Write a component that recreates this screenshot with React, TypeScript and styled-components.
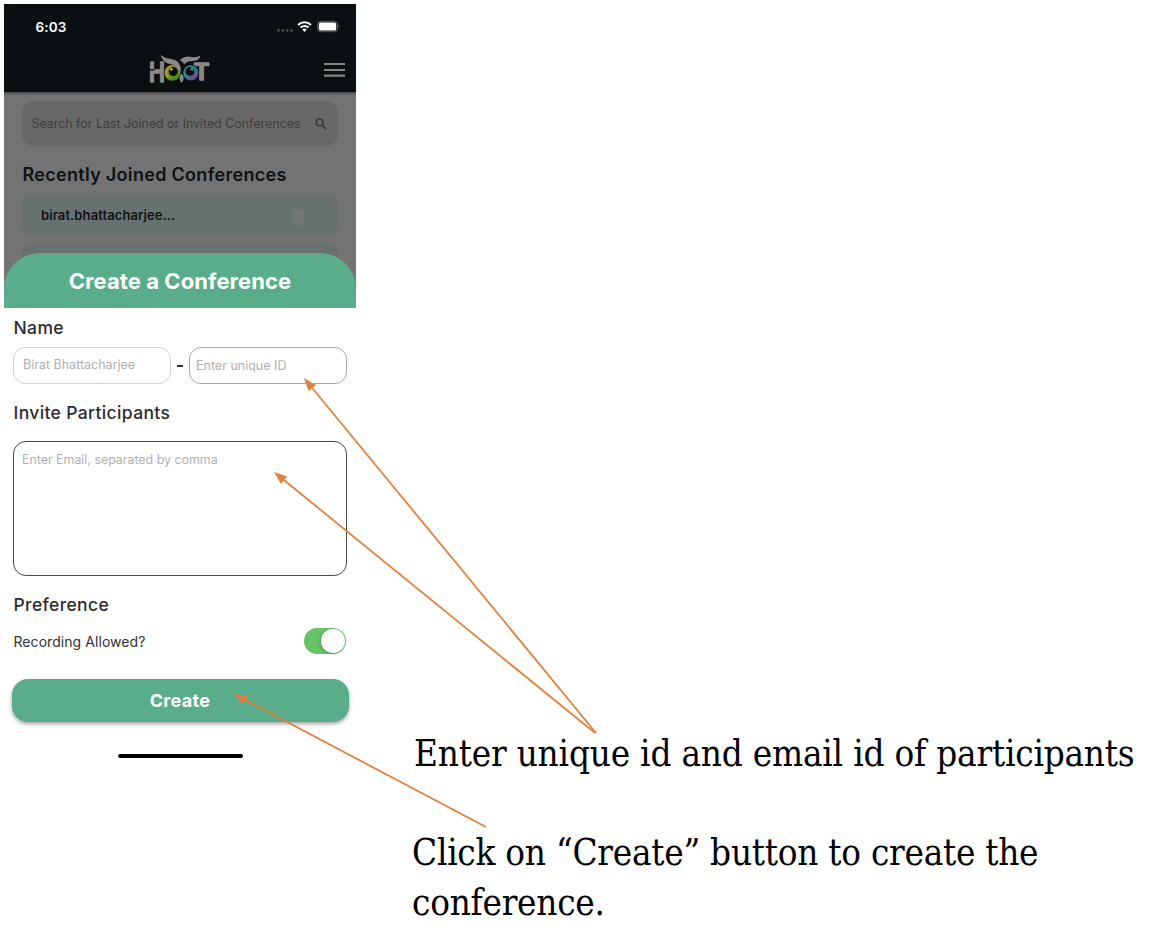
import React from "react";
import styled, { createGlobalStyle } from "styled-components";

const GlobalStyle = createGlobalStyle`
  * { box-sizing: border-box; }
  body { margin: 0; background: #fff; font-family: Inter, "Liberation Sans", sans-serif; }
`;

const Page = styled.main`
  position: relative;
  display: flex;
  width: 1166px;
  height: 936px;
  overflow: hidden;
`;

const Phone = styled.section`
  display: flex;
  flex-direction: column;
  width: 352px;
  height: 768px;
  margin: 4px 0 0 4px;
  flex: none;
`;

const TopBar = styled.header`
  height: 88px;
  flex: none;
  background: #0a0f12;
  box-shadow: 0 1px 3px rgba(0, 0, 0, 0.55);
  clip-path: inset(0 0 -6px 0);
  z-index: 1;
`;

const StatusBar = styled.div`
  display: flex;
  align-items: center;
  justify-content: space-between;
  height: 45px;
  padding: 0 16px 0 31.5px;
`;

const Clock = styled.span`
  color: #fff;
  font-size: 13.5px;
  font-weight: 600;
  letter-spacing: 0.1px;
`;

const NavBar = styled.div`
  display: grid;
  grid-template-columns: 1fr 62px 1fr;
  align-items: center;
  height: 43px;
  padding: 0 11.5px 0 10.5px;
`;

const MenuSlot = styled.span`
  display: flex;
  justify-content: flex-end;
  padding-bottom: 2px;
`;

const Backdrop = styled.div`
  display: flex;
  flex-direction: column;
  height: 215px;
  margin-bottom: -54px;
  padding: 9px 18px 0;
  background: #737373;
  flex: none;
  overflow: hidden;
`;

const SearchBox = styled.div`
  display: flex;
  align-items: center;
  justify-content: space-between;
  height: 45px;
  padding: 0 10px 1px 9.5px;
  border-radius: 12px;
  background: #686868;
  color: #3f3f3f;
  font-size: 12.4px;
  letter-spacing: 0;
  flex: none;
  white-space: nowrap;
  svg { flex: none; margin-top: 1px; }
`;

const SectionTitle = styled.h2`
  margin: 18px 0 8px 0.5px;
  color: #0e1215;
  font-size: 18px;
  font-weight: 600;
  line-height: 22px;
  letter-spacing: 0.3px;
  white-space: nowrap;
`;

const ConferenceRow = styled.div`
  display: flex;
  align-items: center;
  justify-content: space-between;
  height: 41px;
  margin-bottom: 8.5px;
  padding: 0 33px 0 19px;
  border-radius: 9px;
  background: #697070;
  color: #101416;
  font-size: 13px;
  font-weight: 600;
  letter-spacing: 0.1px;
  flex: none;
  svg { margin-top: 5px; }
`;

const Sheet = styled.div`
  display: flex;
  flex-direction: column;
  position: relative;
  z-index: 2;
`;

const SheetTitle = styled.h1`
  display: flex;
  align-items: center;
  justify-content: center;
  height: 54.5px;
  margin: 0;
  padding-top: 2px;
  border-radius: 36px 36px 0 0;
  background: #5aad8a;
  color: #fff;
  font-size: 22px;
  font-weight: 650;
  letter-spacing: 0.08px;
`;

const Form = styled.div`
  display: flex;
  flex-direction: column;
  padding: 9px 9px 0;
`;

const Label = styled.h3`
  margin: 0 0 0 0.5px;
  color: #2c2c2e;
  font-size: 17.5px;
  font-weight: 500;
  line-height: 22px;
  letter-spacing: 0.36px;
`;

const NameRow = styled.div`
  display: flex;
  align-items: center;
  justify-content: space-between;
  margin: 8px 0 18px;
  color: #222;
`;

const Dash = styled.span`
  width: 6px;
  height: 2px;
  margin-top: 2px;
  background: #333;
`;

const Field = styled.div<{ $border: string; $pad: number; $drop?: number }>`
  display: flex;
  align-items: center;
  width: 158px;
  height: 37px;
  padding: ${(p) => p.$drop ?? 0}px 0 1px ${(p) => p.$pad}px;
  border: 1px solid ${(p) => p.$border};
  border-radius: 12px;
  color: #b0b0b0;
  font-size: 12.5px;
`;

const EmailArea = styled.div`
  height: 135px;
  margin: 17px 0 18px;
  padding: 9px 8px;
  border: 1.3px solid #4a4a4a;
  border-radius: 13px;
  color: #b0b0b0;
  font-size: 12.4px;
  line-height: 17px;
`;

const SettingRow = styled.div`
  display: flex;
  align-items: center;
  justify-content: space-between;
  height: 27px;
  margin-top: 12px;
  padding-right: 1px;
  color: #333;
  font-size: 14px;
  letter-spacing: 0.06px;
`;

const SettingName = styled.span`
  padding: 1px 0 0 0.5px;
`;

const Toggle = styled.span`
  display: flex;
  justify-content: flex-end;
  width: 42px;
  height: 26px;
  padding: 1.3px;
  border-radius: 13px;
  background: #65c466;
`;

const Knob = styled.span`
  width: 23.4px;
  height: 23.4px;
  border-radius: 50%;
  background: #fff;
  box-shadow: -1px 1px 3px rgba(0, 0, 0, 0.22);
`;

const CreateButton = styled.button`
  height: 43px;
  margin: 24px -1.5px 0;
  border: 0;
  border-radius: 16px;
  background: #5aad8a;
  box-shadow: 0 2px 4px rgba(0, 0, 0, 0.36);
  color: #fff;
  font-family: inherit;
  font-size: 18px;
  font-weight: 650;
  letter-spacing: 0.3px;
`;

const HomeIndicator = styled.div`
  align-self: center;
  width: 125px;
  height: 4.5px;
  margin-top: 32px;
  border-radius: 3px;
  background: #000;
`;

const Notes = styled.aside`
  display: flex;
  flex-direction: column;
  gap: 49px;
  padding: 729px 0 0 56px;
`;

const Note = styled.p<{ $indent?: number; $spacing: number }>`
  margin: 0;
  padding-left: ${(p) => p.$indent ?? 0}px;
  color: #000;
  font-family: "DejaVu Serif Condensed", "DejaVu Serif", serif;
  font-stretch: condensed;
  font-size: 36.5px;
  line-height: 50px;
  letter-spacing: ${(p) => p.$spacing}px;
  white-space: nowrap;
`;

const ArrowLayer = styled.svg`
  position: absolute;
  inset: 0;
  z-index: 3;
  pointer-events: none;
`;

const StatusIcons = () => (
  <svg width="66" height="16" viewBox="0 0 66 16">
    <g fill="#484c4f">
      {[4.5, 8.8, 13.1, 17.4].map((x) => (
        <circle key={x} cx={x} cy="11.4" r="1.4" />
      ))}
    </g>
    <g fill="none" stroke="#fff" strokeWidth="2.1">
      <path d="M24.1 5.9a9.2 9.2 0 0 1 12.8 0" />
      <path d="M26.6 8.6a5.6 5.6 0 0 1 7.8 0" />
    </g>
    <path d="M28.3 10.6a3.2 3.2 0 0 1 4.4 0l-2.2 2.4z" fill="#fff" />
    <rect x="43.5" y="2.3" width="20" height="10.4" rx="3" fill="none" stroke="#5b5f61" />
    <rect x="44.8" y="3.5" width="17.4" height="8" rx="1.5" fill="#fff" />
    <path d="M64.6 5.7q1.6 1.7 0 3.5z" fill="#5b5f61" />
  </svg>
);

const Logo = () => (
  <svg width="62" height="43" viewBox="149 49 62 43">
    <defs>
      <linearGradient id="eyeLeft" x1="0" y1="0" x2="0.8" y2="1">
        <stop offset="0.35" stopColor="#a09c28" />
        <stop offset="1" stopColor="#2c8a22" />
      </linearGradient>
      <linearGradient id="eyeRight" x1="0.1" y1="0" x2="0.8" y2="1">
        <stop offset="0.4" stopColor="#278b91" />
        <stop offset="1" stopColor="#86398a" />
      </linearGradient>
    </defs>
    <g fill="#8a8888" stroke="#8a8888" strokeWidth="1.6" strokeLinejoin="round" fontFamily="Inter, sans-serif" fontWeight="600">
      <text x="149" y="81.6" fontSize="27" textLength="16" lengthAdjust="spacingAndGlyphs">H</text>
      <text x="193.6" y="80.2" fontSize="23" textLength="16" lengthAdjust="spacingAndGlyphs">T</text>
    </g>
    <path d="M149 69.8h5.4" stroke="#0a0f12" strokeWidth="1.4" />
    <circle cx="172.3" cy="72.6" r="8.6" fill="#0a0f12" />
    <circle cx="190.8" cy="72.6" r="8" fill="#0a0f12" />
    <circle cx="172.4" cy="72.8" r="7.9" fill="url(#eyeLeft)" />
    <circle cx="190.8" cy="72.8" r="7.6" fill="url(#eyeRight)" />
    <circle cx="173.2" cy="71.4" r="4.6" fill="#0a0f12" />
    <circle cx="190" cy="71.4" r="4.4" fill="#0a0f12" />
    <circle cx="171.3" cy="69.2" r="1.6" fill="#a09c28" />
    <circle cx="192" cy="69" r="1.7" fill="#278b91" />
    <path d="M160.5 55q4 3.2 10.5 4 8.6 1 9.8 9.4l-.6 6q-1.4-7.6-8.2-9.9-9-1.2-11.5-9.5z" fill="#8a8888" />
    <path d="M179.5 60.2q5-4.8 10-3.4 6.5 1.2 11-1.2-.8 5.2-7.6 5.4-5.6-.4-8.6 3.4-1.4-3.2-4.8-4.2z" fill="#8a8888" />
    <path d="M181.6 73.4q4.2 4.6 0 9.4-4.4-4.8 0-9.4z" fill="#8a8888" />
  </svg>
);

const MenuIcon = () => (
  <svg width="21" height="16" viewBox="0 0 21 16" stroke="#858585" strokeWidth="2.2">
    <path d="M0 2h21M0 8h21M0 13.7h21" />
  </svg>
);

const SearchIcon = () => (
  <svg width="14" height="14" viewBox="0 0 14 14" fill="none" stroke="#353535" strokeWidth="1.4">
    <circle cx="5.6" cy="5.4" r="3.4" />
    <path d="M8 8l4 4" strokeWidth="1.7" />
  </svg>
);

const TrashIcon = () => (
  <svg width="14" height="18" viewBox="0 0 14 18" fill="#747777">
    <path d="M1 2h3.5l1-1h3l1 1H13v1.5H1zM1.5 3.5h11V15q0 2-2 2h-7q-2 0-2-2z" />
  </svg>
);

const arrows = [
  { from: [596, 733], to: [304, 378] },
  { from: [595, 733], to: [274, 472] },
  { from: [486, 827], to: [234, 694] },
];

const Arrow = ({ from, to }: { from: number[]; to: number[] }) => {
  const angle = (Math.atan2(to[1] - from[1], to[0] - from[0]) * 180) / Math.PI;
  const length = Math.hypot(to[0] - from[0], to[1] - from[1]);
  return (
    <g transform={`translate(${to[0]} ${to[1]}) rotate(${angle})`} fill="#df823f">
      <path d={`M${-length} 0H-10`} stroke="#df823f" strokeWidth="1.8" />
      <path d="M0 0l-13-4.8v9.6z" />
    </g>
  );
};

export default function App() {
  return (
    <Page>
      <GlobalStyle />
      <Phone>
        <TopBar>
          <StatusBar>
            <Clock>6:03</Clock>
            <StatusIcons />
          </StatusBar>
          <NavBar>
            <span />
            <Logo />
            <MenuSlot>
              <MenuIcon />
            </MenuSlot>
          </NavBar>
        </TopBar>
        <Backdrop>
          <SearchBox>
            Search for Last Joined or Invited Conferences
            <SearchIcon />
          </SearchBox>
          <SectionTitle>Recently Joined Conferences</SectionTitle>
          <ConferenceRow>
            birat.bhattacharjee...
            <TrashIcon />
          </ConferenceRow>
          <ConferenceRow />
        </Backdrop>
        <Sheet>
          <SheetTitle>Create a Conference</SheetTitle>
          <Form>
            <Label>Name</Label>
            <NameRow>
              <Field $border="#d2d2d2" $pad={9}>Birat Bhattacharjee</Field>
              <Dash />
              <Field $border="#a8a8a8" $pad={6} $drop={2}>Enter unique ID</Field>
            </NameRow>
            <Label>Invite Participants</Label>
            <EmailArea>Enter Email, separated by comma</EmailArea>
            <Label>Preference</Label>
            <SettingRow>
              <SettingName>Recording Allowed?</SettingName>
              <Toggle>
                <Knob />
              </Toggle>
            </SettingRow>
            <CreateButton>Create</CreateButton>
            <HomeIndicator />
          </Form>
        </Sheet>
      </Phone>
      <Notes>
        <Note $indent={2} $spacing={-0.2}>Enter unique id and email id of participants</Note>
        <Note $spacing={-0.25}>
          Click on “Create” button to create the
          <br />
          conference.
        </Note>
      </Notes>
      <ArrowLayer width="1166" height="936">
        {arrows.map((a) => (
          <Arrow key={a.to[0]} {...a} />
        ))}
      </ArrowLayer>
    </Page>
  );
}
